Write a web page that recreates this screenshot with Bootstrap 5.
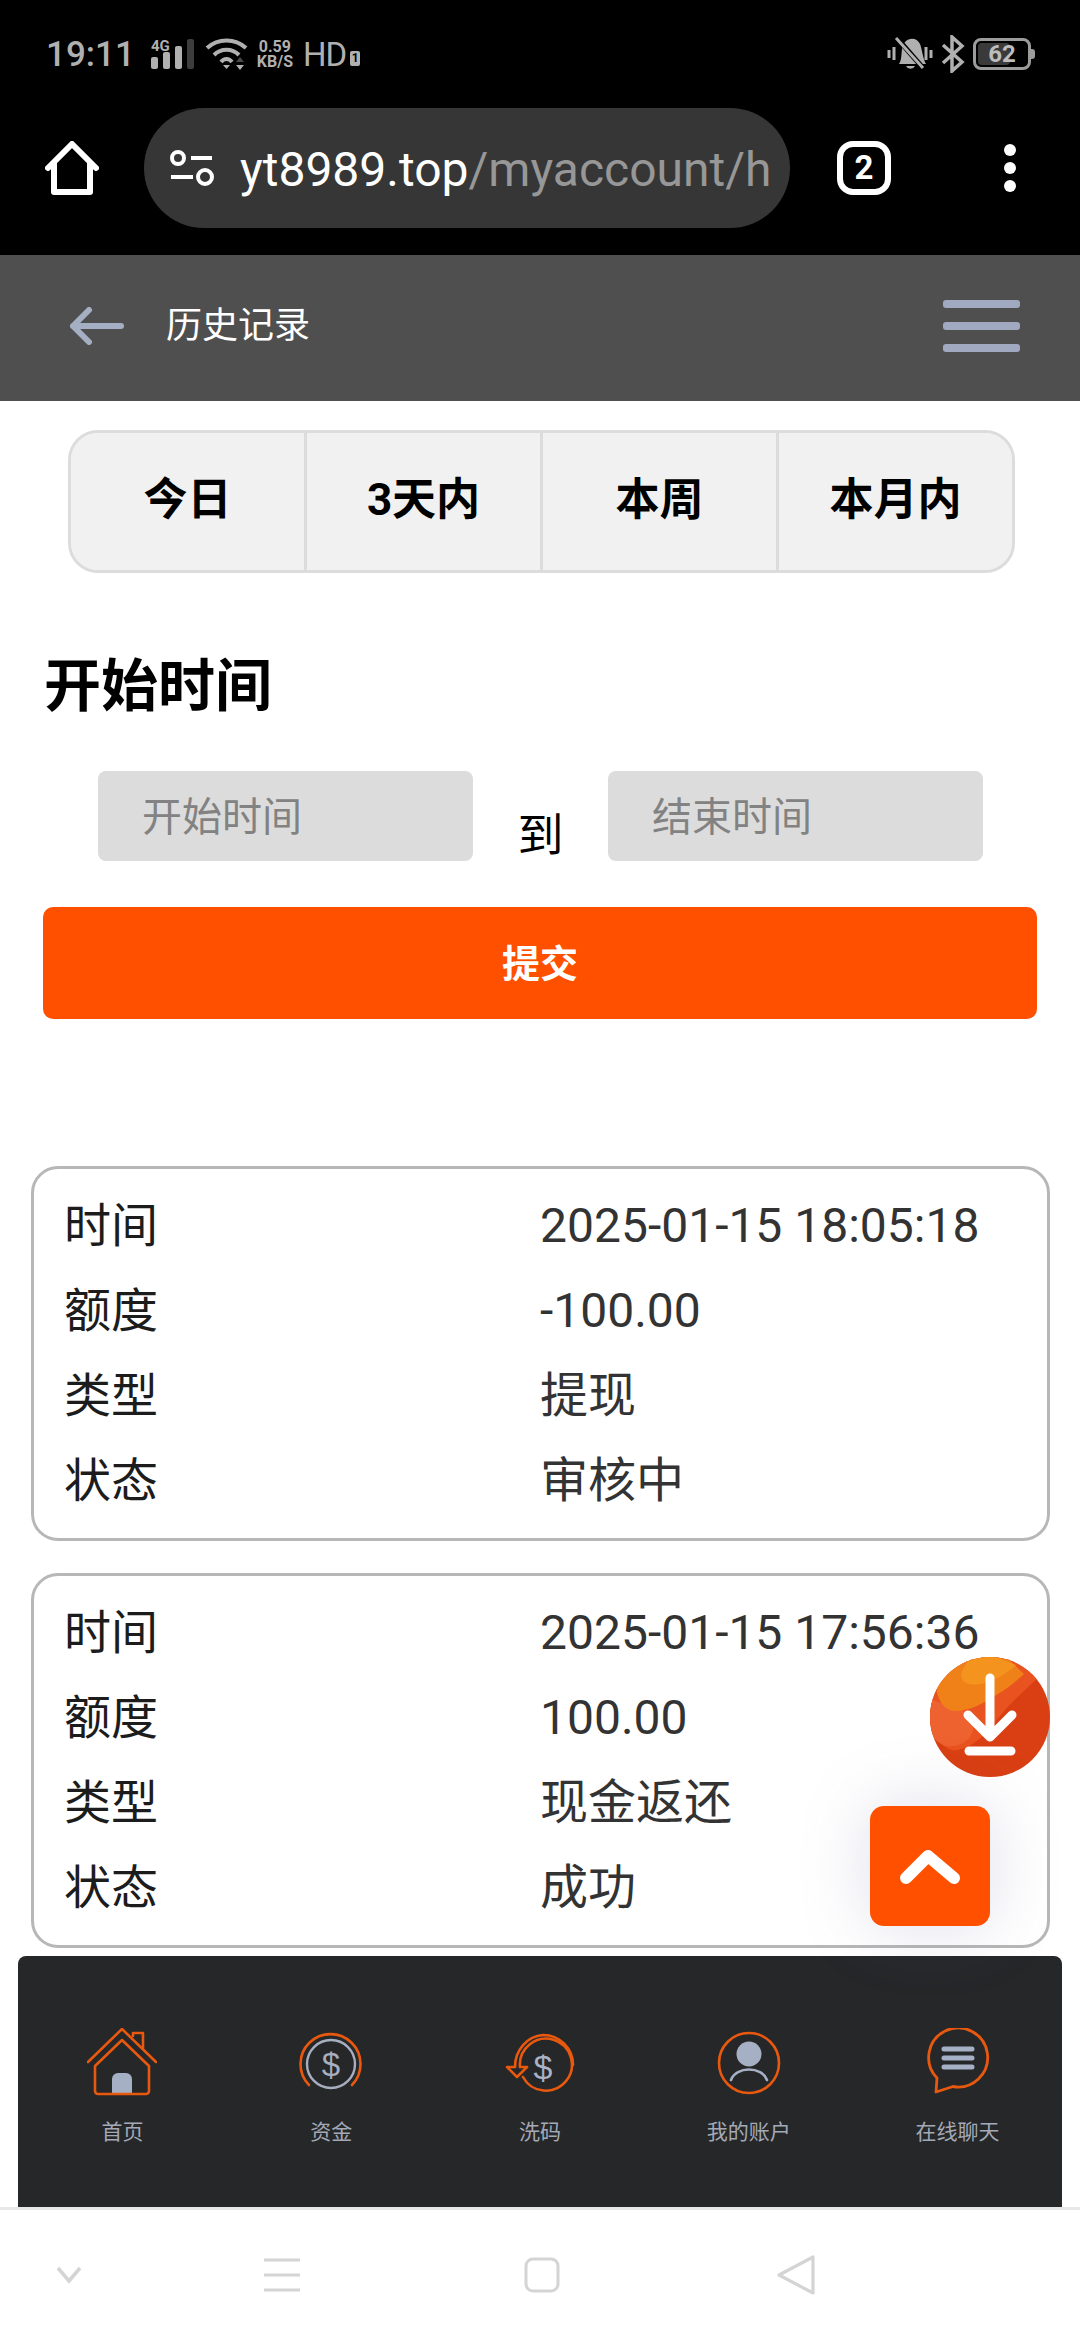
<!DOCTYPE html>
<html lang="zh-CN">
<head>
    <meta charset="UTF-8">
    <meta name="viewport" content="width=device-width, initial-scale=1.0">
    <title>历史记录</title>
    <link rel="stylesheet" href="https://cdn.jsdelivr.net/npm/bootstrap@5.3.0/dist/css/bootstrap.min.css">
    <style>
        html, body { margin: 0; background: #fff; }
        body { font-family: Roboto, "Noto Sans CJK SC", sans-serif; color: #222; }
        svg { display: block; flex: none; }

        .phone { position: relative; width: 1080px; height: 2340px; overflow: hidden; display: flex; flex-direction: column; }

        /* android status bar + browser bar */
        .status-strip { height: 108px; background: #000; color: #b0b0b0; padding: 0 45px 0 46px; }
        .clock { font-size: 35px; line-height: 1; font-weight: 500; }
        .net-speed { font-size: 16px; line-height: 15px; font-weight: 700; text-align: center; }
        .net-speed span { display: block; }
        .hd-mark { font-size: 33px; line-height: 1; letter-spacing: -1px; margin-left: 10px; }
        .sim-mark { width: 10px; height: 15px; background: #b0b0b0; color: #000; font-size: 12px; line-height: 15px; font-weight: 700; text-align: center; border-radius: 2px; }
        .battery { position: relative; width: 58px; height: 32px; border: 3px solid #9c9c9c; border-radius: 8px; color: #bdbdbd; font-size: 24px; line-height: 26px; font-weight: 700; text-align: center; }
        .battery-fill { position: absolute; left: 2px; top: 2px; bottom: 2px; width: 62%; background: #3a3a3a; border-radius: 4px; }
        .battery-num { position: relative; }
        .battery-tip { width: 4px; height: 10px; background: #9c9c9c; border-radius: 0 3px 3px 0; }

        .browser-strip { height: 147px; background: #000; padding: 0 0 27px 45px; }
        .url-pill { width: 646px; height: 120px; margin-left: 45px; background: #363636; border-radius: 60px; padding: 0 20px 0 25px; }
        .url-text { margin-left: 25px; padding-top: 3px; white-space: nowrap; font-size: 48px; line-height: 1; color: #fff; }
        .url-text span { color: #979797; }
        .tab-count { width: 54px; height: 54px; margin-left: 47px; border: 6px solid #fff; border-radius: 16px; color: #fff; font-size: 33px; font-weight: 700; line-height: 42px; text-align: center; }
        .dots { margin-left: 112px; }

        /* page header */
        .page-head { height: 146px; background: #4f4f4f; padding: 0 60px 4px 70px; }
        .page-title { margin-left: 42px; color: #fff; font-size: 36px; line-height: 1; }

        /* page body */
        .page-body { flex: 1 1 auto; padding: 29px 30px 0 31px; min-height: 0; }
        .range-group { display: flex; width: 947px; height: 143px; margin-left: 37px; background: #f1f1f1; border: 3px solid #dcdcdc; border-radius: 30px; overflow: hidden; }
        .range-group .btn { flex: 1 1 0; border: 0; border-radius: 0; border-left: 3px solid #dcdcdc; background: #f1f1f1; color: #000; font-size: 44px; line-height: 1; font-weight: 700; padding: 0 0 3px; }
        .range-group .btn:first-child { border-left: 0; }

        .date-heading { margin: 80px 0 0 13px; font-size: 57px; line-height: 68px; font-weight: 700; color: #000; }
        .date-row { margin: 50px 0 0 67px; width: 885px; height: 90px; }
        .date-row .form-control { width: 375px; height: 90px; background: #dcdcdc; border: 0; border-radius: 8px; padding: 2px 44px 0; font-size: 40px; }
        .date-row .form-control::placeholder { color: #828282; opacity: 1; }
        .date-to { flex: 1 1 auto; text-align: center; font-size: 46px; line-height: 1; color: #000; padding-top: 41px; }
        .submit-btn { display: block; width: 994px; height: 112px; margin: 46px 0 0 12px; padding: 2px 0 0; background: #ff5000; border: 0; border-radius: 10px; color: #fff; font-size: 38px; line-height: 1; font-weight: 700; }
        .submit-btn:hover { background: #ff5000; color: #fff; }

        .record { width: 1019px; height: 375px; border: 3px solid #b7b7b7; border-radius: 27px; padding: 14px 0 14px 30px; background: #fff; }
        .record-first { margin-top: 147px; }
        .record + .record { margin-top: 32px; }
        .record-row { height: 85px; font-size: 47px; line-height: 85px; color: #1c1c1c; display: flex; }
        .record-row b { width: 476px; font-weight: 400; }
        .record-row span { color: #333; font-size: 48px; }

        /* floating buttons */
        .float-down { position: absolute; left: 930px; top: 1657px; width: 120px; height: 120px; z-index: 5; }
        .float-up { position: absolute; left: 870px; top: 1806px; width: 120px; height: 120px; background: #ff5000; border-radius: 14px; box-shadow: 0 0 70px rgba(110, 110, 160, .22); z-index: 5; }

        /* bottom tabs */
        .tab-bar { width: 1044px; height: 251px; margin: 0 18px; background: #262729; border-radius: 8px 8px 0 0; flex: none; }
        .tab-cell { position: relative; width: 20%; height: 100%; text-align: center; color: #a3a9b6; font-size: 21px; line-height: 1; }
        .tab-cell svg { position: absolute; left: 50%; top: 72px; margin-left: -35px; }
        .tab-cell span { position: absolute; left: 0; right: 0; top: 166px; }

        .sys-bar { height: 133px; background: #fff; border-top: 3px solid #e8e8e6; flex: none; }
    </style>
</head>
<body>
<div class="phone">

    <div class="status-strip d-flex align-items-center flex-none">
        <div class="clock">19:11</div>
        <svg class="ms-3" width="46" height="32" viewBox="0 0 46 32">
            <text x="0" y="13" font-family="Roboto" font-size="15" font-weight="700" fill="#b0b0b0">4G</text>
            <g fill="#b0b0b0">
                <rect x="0" y="19" width="7" height="12" rx="2"/>
                <rect x="12" y="14" width="7" height="17" rx="2"/>
                <rect x="24" y="8" width="7" height="23" rx="2"/>
            </g>
            <rect x="36" y="1" width="7" height="30" rx="2" fill="#3d3d3d"/>
        </svg>
        <svg class="ms-2" width="44" height="34" viewBox="0 0 44 34" fill="none" stroke="#b0b0b0" stroke-width="4">
            <path d="M2 11 C13 1 30 1 41 11"/>
            <path d="M9 18 C16 11 27 11 34 18"/>
            <path d="M16 25 C19 21 24 21 27 25"/>
            <path d="M18 28 h7 l-3.5 4z" fill="#b0b0b0" stroke="none"/>
            <path d="M31 25 h8 l-4 -5z" fill="#4a4a4a" stroke="none"/>
            <path d="M31 28 h8 l-4 5z" fill="#b0b0b0" stroke="none"/>
        </svg>
        <div class="net-speed ms-2"><span>0.59</span><span>KB/S</span></div>
        <div class="hd-mark">HD</div>
        <div class="sim-mark ms-1 align-self-center mt-2">1</div>
        <div class="ms-auto d-flex align-items-center">
            <svg width="46" height="38" viewBox="0 0 46 38" fill="none">
                <path d="M12 29 C16 24 13 12 18 7 C23 2 30 3 33 9 C35 14 36 24 39 29 Z" fill="#b0b0b0"/>
                <path d="M19 31 a5 5 0 0 0 9 0z" fill="#b0b0b0"/>
                <path d="M9 2 L36 33" stroke="#000" stroke-width="5"/>
                <path d="M9 3 L36 33" stroke="#b0b0b0" stroke-width="3"/>
                <path d="M2 15 v8 M7 12 v13 M39 12 v13 M44 15 v8" stroke="#b0b0b0" stroke-width="3"/>
            </svg>
            <svg class="ms-2" width="24" height="38" viewBox="0 0 24 38" fill="none" stroke="#b0b0b0" stroke-width="3.5">
                <path d="M2 10 L21 27 L11 36 V2 L21 11 L2 28"/>
            </svg>
            <div class="battery ms-2"><div class="battery-fill"></div><div class="battery-num">62</div></div>
            <div class="battery-tip"></div>
        </div>
    </div>

    <div class="browser-strip d-flex align-items-center">
        <svg width="54" height="54" viewBox="0 0 54 54" fill="none" stroke="#fff" stroke-width="6" stroke-linejoin="round" stroke-linecap="round">
            <path d="M3 27 L27 3 L51 27 M9 23 V51 H45 V23"/>
        </svg>
        <div class="url-pill d-flex align-items-center">
            <svg width="46" height="36" viewBox="0 0 46 36" fill="none" stroke="#fff" stroke-width="4">
                <circle cx="9" cy="8" r="6"/>
                <path d="M22 8 H43"/>
                <path d="M2 27 H24"/>
                <circle cx="36" cy="27" r="7"/>
            </svg>
            <div class="url-text">yt8989.top<span>/myaccount/h</span></div>
        </div>
        <div class="tab-count">2</div>
        <svg class="dots" width="14" height="50" viewBox="0 0 14 50" fill="#fff">
            <circle cx="7" cy="7" r="6"/><circle cx="7" cy="25" r="6"/><circle cx="7" cy="43" r="6"/>
        </svg>
    </div>

    <div class="page-head d-flex align-items-center">
        <svg width="54" height="38" viewBox="0 0 54 38" fill="none" stroke="#a5afc4" stroke-width="6" stroke-linecap="round" stroke-linejoin="round">
            <path d="M19 3 L3 19 L19 35 M3 19 H51"/>
        </svg>
        <div class="page-title">历史记录</div>
        <svg class="ms-auto" width="77" height="52" viewBox="0 0 77 52" fill="#a0a9bf">
            <rect y="0" width="77" height="8" rx="3"/>
            <rect y="22" width="77" height="8" rx="3"/>
            <rect y="44" width="77" height="8" rx="3"/>
        </svg>
    </div>

    <div class="page-body">
        <div class="range-group" role="group">
            <button type="button" class="btn">今日</button>
            <button type="button" class="btn">3天内</button>
            <button type="button" class="btn">本周</button>
            <button type="button" class="btn">本月内</button>
        </div>

        <div class="date-heading">开始时间</div>
        <div class="date-row d-flex">
            <input type="text" class="form-control" placeholder="开始时间">
            <div class="date-to">到</div>
            <input type="text" class="form-control" placeholder="结束时间">
        </div>
        <button type="button" class="btn submit-btn">提交</button>

        <div class="record record-first">
            <div class="record-row"><b>时间</b><span>2025-01-15 18:05:18</span></div>
            <div class="record-row"><b>额度</b><span>-100.00</span></div>
            <div class="record-row"><b>类型</b><span>提现</span></div>
            <div class="record-row"><b>状态</b><span>审核中</span></div>
        </div>
        <div class="record">
            <div class="record-row"><b>时间</b><span>2025-01-15 17:56:36</span></div>
            <div class="record-row"><b>额度</b><span>100.00</span></div>
            <div class="record-row"><b>类型</b><span>现金返还</span></div>
            <div class="record-row"><b>状态</b><span>成功</span></div>
        </div>
    </div>

    <svg class="float-down" viewBox="0 0 120 120">
        <defs><clipPath id="dlClip"><circle cx="60" cy="60" r="60"/></clipPath></defs>
        <g clip-path="url(#dlClip)">
            <rect width="120" height="120" fill="#d93f12"/>
            <path d="M0 72 C8 88 20 95 28 93 C40 90 48 84 56 76 C66 64 78 48 90 38 C98 30 104 24 110 19 L100 0 L0 0 Z" fill="#e9531f"/>
            <path d="M0 42 L0 75 C8 92 26 92 36 84 C44 78 46 66 38 56 Z" fill="#ee6230"/>
            <path d="M6 30 C8 46 16 54 26 54 C40 54 54 46 68 37 C78 31 86 24 94 17 L76 0 L24 0 Z" fill="#f08119"/>
            <path d="M32 14 C28 26 40 30 54 26 C68 22 80 14 86 8 L66 0 L40 0 Z" fill="#f5931f"/>
        </g>
        <path d="M60 21 V80 M38 58 L60 80 L82 58 M39 94 H81" fill="none" stroke="#fff" stroke-width="9" stroke-linecap="round" stroke-linejoin="round"/>
    </svg>
    <div class="float-up d-flex align-items-center justify-content-center">
        <svg width="62" height="38" viewBox="0 0 62 38" fill="none" stroke="#fff" stroke-width="12" stroke-linecap="round" stroke-linejoin="round">
            <path d="M7 31 L29 9 L55 31"/>
        </svg>
    </div>

    <div class="tab-bar d-flex">
        <div class="tab-cell">
            <svg width="70" height="70" viewBox="0 0 70 70" fill="none" stroke="#e8590f" stroke-width="2.6" stroke-linecap="round" stroke-linejoin="round">
                <path d="M25 66 V51 a6 6 0 0 1 6 -6 h8 a6 6 0 0 1 6 6 V66 Z" fill="#a6b0c5" stroke="none"/>
                <path d="M1 34 L35 1 L69 34"/>
                <path d="M8 38 L35 12 L62 38 V63 a3 3 0 0 1 -3 3 H11 a3 3 0 0 1 -3 -3 Z"/>
                <path d="M46 8 V5 H56 V20"/>
            </svg>
            <span>首页</span>
        </div>
        <div class="tab-cell">
            <svg width="70" height="70" viewBox="0 0 70 70" fill="none">
                <path d="M13 57 A30 30 0 1 1 56 57" stroke="#e8590f" stroke-width="2.6" stroke-linecap="round"/>
                <circle cx="35" cy="36" r="24" stroke="#a6aebf" stroke-width="2.4"/>
                <text x="35" y="48" text-anchor="middle" font-family="Liberation Sans, sans-serif" font-size="33" fill="#a6aebf">$</text>
            </svg>
            <span>资金</span>
        </div>
        <div class="tab-cell">
            <svg width="70" height="70" viewBox="0 0 70 70" fill="none" stroke="#e8590f" stroke-width="2.6" stroke-linecap="round" stroke-linejoin="round">
                <path d="M68 37 A30 30 0 0 0 38 7 A30 32 0 0 0 10 39"/>
                <path d="M15 39 A26 26 0 1 1 18 49"/>
                <path d="M10 39 H2 L12 49 L22 39 H15"/>
                <text x="38" y="51" text-anchor="middle" font-family="Liberation Sans, sans-serif" font-size="34" fill="#a9b2c6" stroke="none">$</text>
            </svg>
            <span>洗码</span>
        </div>
        <div class="tab-cell">
            <svg width="70" height="70" viewBox="0 0 70 70" fill="none">
                <circle cx="35" cy="35" r="30" stroke="#e8590f" stroke-width="2.6"/>
                <circle cx="35" cy="26" r="12.5" fill="#a6b0c5"/>
                <path d="M17 52 C22 38 48 38 53 52" stroke="#a6b0c5" stroke-width="2.6" stroke-linecap="round"/>
            </svg>
            <span>我的账户</span>
        </div>
        <div class="tab-cell">
            <svg width="70" height="70" viewBox="0 0 70 70" fill="none">
                <path d="M14 50 A29.5 29.5 0 1 1 30 58.5 L13 64 Z" stroke="#e8590f" stroke-width="2.8" stroke-linejoin="round"/>
                <path d="M21 21 H49 M21 30 H49 M21 39 H49" stroke="#a6b0c5" stroke-width="5" stroke-linecap="round"/>
            </svg>
            <span>在线聊天</span>
        </div>
    </div>

    <div class="sys-bar d-flex align-items-center">
        <svg style="margin-left:56px" width="26" height="20" viewBox="0 0 26 20" fill="none" stroke="#d4d4d4" stroke-width="3.5"><path d="M2 3 L13 16 L24 3"/></svg>
        <svg style="margin-left:182px" width="36" height="34" viewBox="0 0 36 34" fill="none" stroke="#d4d4d4" stroke-width="3"><path d="M0 2 H36 M0 17 H36 M0 32 H36"/></svg>
        <svg style="margin-left:224px" width="36" height="36" viewBox="0 0 36 36" fill="none" stroke="#d4d4d4" stroke-width="3"><rect x="2" y="2" width="32" height="32" rx="7"/></svg>
        <svg style="margin-left:217px" width="38" height="40" viewBox="0 0 38 40" fill="none" stroke="#d4d4d4" stroke-width="3.2" stroke-linejoin="round"><path d="M2 20 L36 2 V38 Z"/></svg>
    </div>
</div>
<script src="https://cdn.jsdelivr.net/npm/bootstrap@5.3.0/dist/js/bootstrap.bundle.min.js"></script>
</body>
</html>
